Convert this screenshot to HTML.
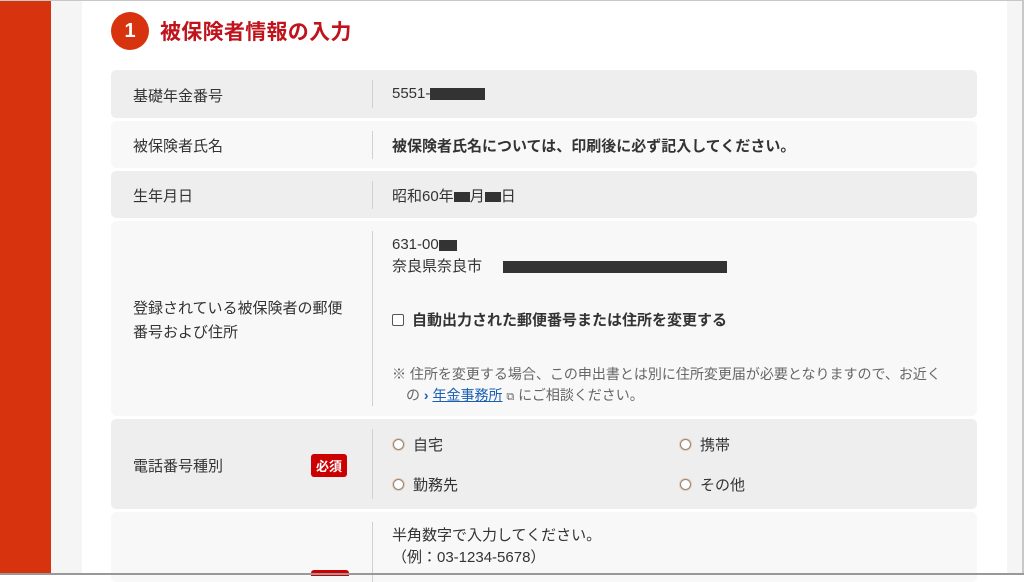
<!DOCTYPE html>
<html><head><meta charset="utf-8"><style>
*{margin:0;padding:0;box-sizing:border-box}
body{width:1024px;height:575px;overflow:hidden;position:relative;background:#fff;font-family:"Liberation Sans","Noto Sans CJK JP",sans-serif;color:#333;font-size:15px}
.red{position:absolute;left:0;top:0;width:51px;height:575px;background:#d8330f}
.lg{position:absolute;left:51px;top:0;width:31px;height:575px;background:#f5f5f5}
.rg{position:absolute;left:1007px;top:0;width:15px;height:575px;background:#f5f5f5}
.rb{position:absolute;left:1022px;top:0;width:2px;height:575px;background:#c8c8c8}
.tb{position:absolute;left:0;top:0;width:1024px;height:1px;background:#c8c8c8}
.bb{position:absolute;left:0;top:573px;width:1024px;height:2px;background:#999}
.badge{position:absolute;left:111px;top:12px;width:38px;height:38px;border-radius:50%;background:#d8330f;color:#fff;font-weight:bold;font-size:20px;text-align:center;line-height:38px}
.title{position:absolute;left:160px;top:16px;font-size:21px;font-weight:bold;color:#c0141c;letter-spacing:0.3px}
.row{position:absolute;left:111px;width:866px;border-radius:5px}
.g{background:#eeeeee}.l{background:#f8f8f8}
.lab{position:absolute;left:22px}
.div{position:absolute;left:261px;width:1px;background:#d0d0d0}
.val{position:absolute;left:281px}
.blk{display:inline-block;background:#333;vertical-align:middle}
.req{position:absolute;left:200px;top:35px;background:#c00;color:#fff;font-weight:bold;font-size:13px;padding:2px 5px;border-radius:3px}
.rad{position:absolute;width:11px;height:11px;border-radius:50%;border:1px solid #888;background:#fff;box-shadow:0 0 0 1px #f0c8a8}
</style></head><body>
<div class="red"></div><div class="lg"></div><div class="rg"></div><div class="rb"></div><div class="tb"></div>
<div class="badge">1</div><div class="title">被保険者情報の入力</div>

<div class="row g" style="top:70px;height:48px"><div class="lab" style="top:15px">基礎年金番号</div><div class="div" style="top:10px;height:28px"></div><div class="val" style="top:15px">5551-<span class="blk" style="width:55px;height:12px"></span></div></div>

<div class="row l" style="top:121px;height:47px"><div class="lab" style="top:14px">被保険者氏名</div><div class="div" style="top:10px;height:28px"></div><div class="val" style="top:14px;font-weight:bold">被保険者氏名については、印刷後に必ず記入してください。</div></div>

<div class="row g" style="top:171px;height:47px"><div class="lab" style="top:14px">生年月日</div><div class="div" style="top:10px;height:28px"></div><div class="val" style="top:14px">昭和60年<span class="blk" style="width:16px;height:10px"></span>月<span class="blk" style="width:16px;height:10px"></span>日</div></div>

<div class="row l" style="top:221px;height:195px"><div class="lab" style="top:76px;line-height:24px">登録されている被保険者の郵便<br>番号および住所</div><div class="div" style="top:10px;height:175px"></div>
<div class="val" style="top:13px;line-height:22px">631-00<span class="blk" style="width:18px;height:11px"></span><br>奈良県奈良市　<span class="blk" style="width:224px;height:12px;margin-left:6px"></span></div>
<div class="val" style="top:88px;font-weight:bold"><span style="display:inline-block;width:12px;height:12px;border:1px solid #555;border-radius:2px;background:#fff;vertical-align:-1px;margin-right:8px"></span>自動出力された郵便番号または住所を変更する</div>
<div class="val" style="top:143px;font-size:14px;color:#666;line-height:21px">※ 住所を変更する場合、この申出書とは別に住所変更届が必要となりますので、お近く<br>　の <b style="color:#1a5fb4">›</b> <span style="color:#1a5fb4;text-decoration:underline">年金事務所</span> <span style="font-size:11px">⧉</span> にご相談ください。</div></div>

<div class="row g" style="top:419px;height:90px"><div class="lab" style="top:36px">電話番号種別</div><span class="req">必須</span><div class="div" style="top:10px;height:70px"></div>
<div class="rad" style="left:282px;top:20px"></div><div class="val" style="left:302px;top:15px">自宅</div>
<div class="rad" style="left:569px;top:20px"></div><div class="val" style="left:589px;top:15px">携帯</div>
<div class="rad" style="left:282px;top:60px"></div><div class="val" style="left:302px;top:55px">勤務先</div>
<div class="rad" style="left:569px;top:60px"></div><div class="val" style="left:589px;top:55px">その他</div></div>

<div class="row l" style="top:512px;height:70px"><div class="div" style="top:10px;height:60px"></div><div class="val" style="top:13px;line-height:22px">半角数字で入力してください。<br>（例：03-1234-5678）</div><div style="position:absolute;left:200px;top:58px;width:38px;height:6px;background:#c00;border-radius:3px 3px 0 0"></div></div>
<div class="bb"></div>
</body></html>
